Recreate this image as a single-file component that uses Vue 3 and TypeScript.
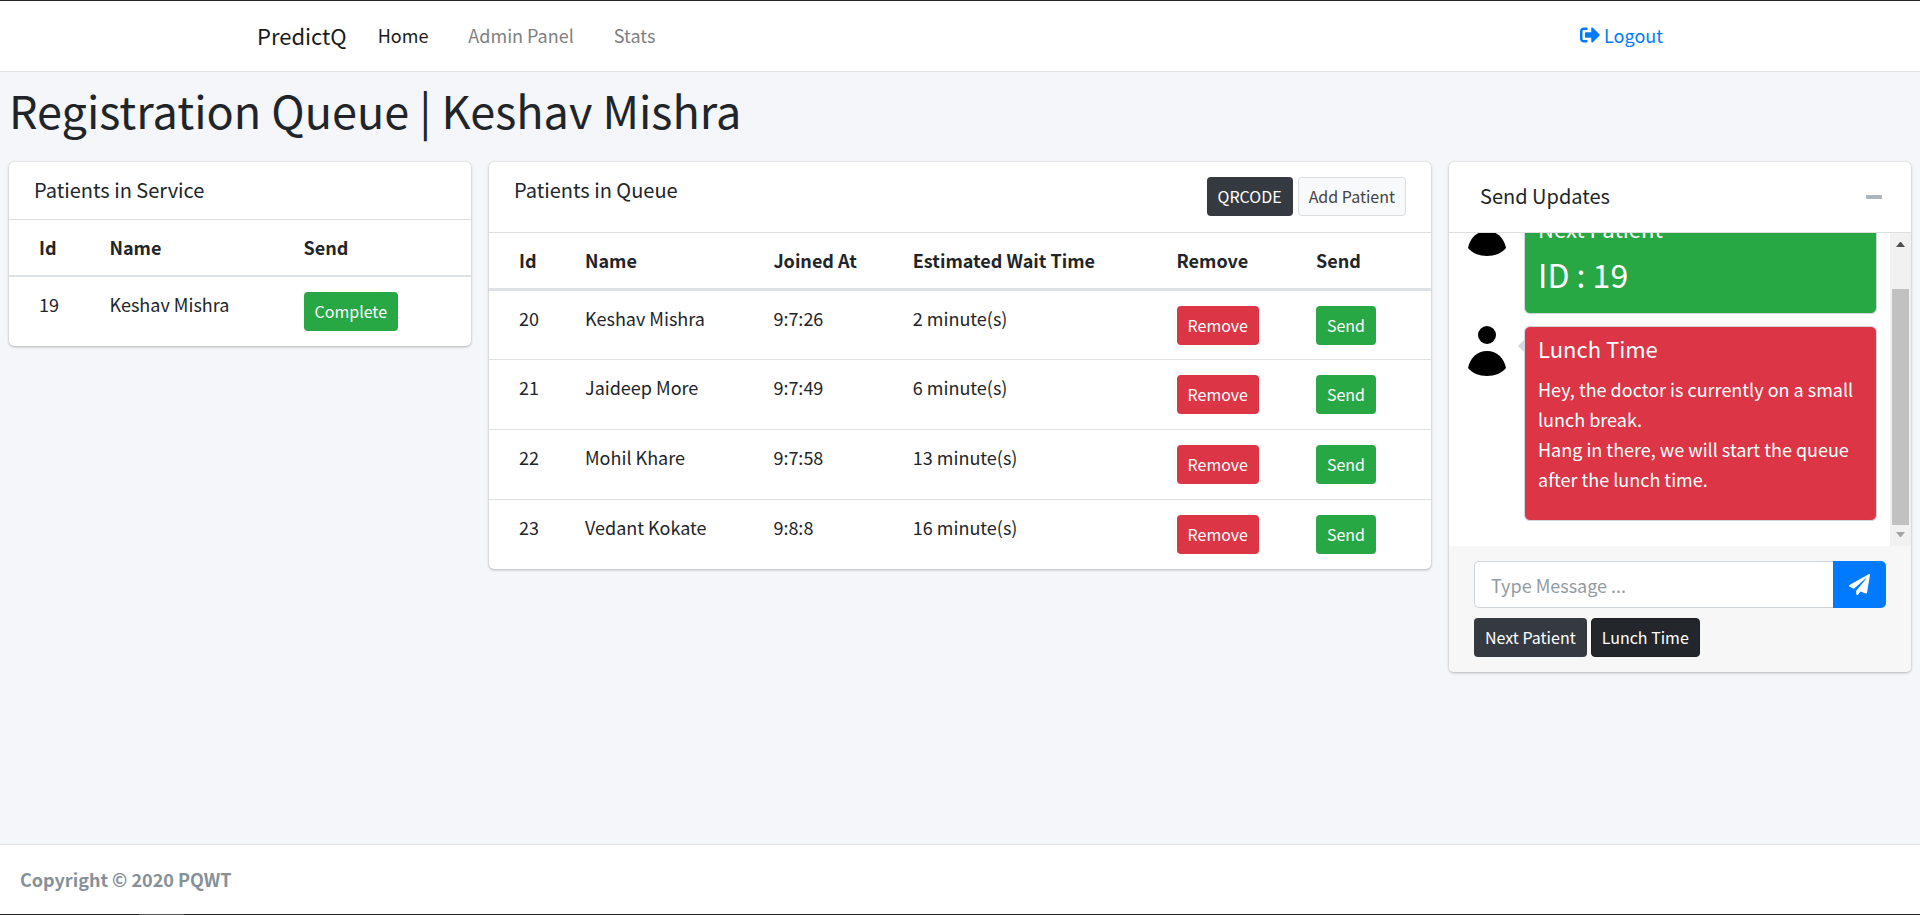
<script setup lang="ts">
import { ref } from 'vue'

interface Patient {
  id: number
  name: string
  joined: string
  wait: number
}

const inService = ref([{ id: 19, name: 'Keshav Mishra' }])

const queue = ref<Patient[]>([
  { id: 20, name: 'Keshav Mishra', joined: '9:7:26', wait: 2 },
  { id: 21, name: 'Jaideep More', joined: '9:7:49', wait: 6 },
  { id: 22, name: 'Mohil Khare', joined: '9:7:58', wait: 13 },
  { id: 23, name: 'Vedant Kokate', joined: '9:8:8', wait: 16 },
])

const message = ref('')
</script>

<template>
  <div class="page">
    <header class="navbar">
      <nav class="nav-inner">
        <a class="brand" href="#">PredictQ</a>
        <a class="nav-link active" href="#">Home</a>
        <a class="nav-link" href="#">Admin Panel</a>
        <a class="nav-link" href="#">Stats</a>
        <a class="logout" href="#">
          <svg class="logout-icon" viewBox="0 0 512 512" aria-hidden="true">
            <path d="M497 273L329 441c-15 15-41 4.500-41-17v-96H152c-13.300 0-24-10.700-24-24v-96c0-13.300 10.700-24 24-24h136V88c0-21.400 25.900-32 41-17l168 168c9.300 9.400 9.300 24.600 0 34zM192 436v-40c0-6.600-5.400-12-12-12H96c-17.700 0-32-14.300-32-32V160c0-17.700 14.300-32 32-32h84c6.600 0 12-5.400 12-12V76c0-6.600-5.400-12-12-12H96c-53 0-96 43-96 96v192c0 53 43 96 96 96h84c6.600 0 12-5.400 12-12z" />
          </svg>
          Logout
        </a>
      </nav>
    </header>

    <main class="content">
      <h1>Registration Queue | Keshav Mishra</h1>

      <div class="row">
        <section class="card side">
          <div class="card-header">
            <h2>Patients in Service</h2>
          </div>
          <table>
            <colgroup>
              <col class="s-id" />
              <col class="s-name" />
              <col />
            </colgroup>
            <thead>
              <tr>
                <th>Id</th>
                <th>Name</th>
                <th>Send</th>
              </tr>
            </thead>
            <tbody>
              <tr v-for="p in inService" :key="p.id">
                <td>{{ p.id }}</td>
                <td>{{ p.name }}</td>
                <td><button type="button" class="btn success">Complete</button></td>
              </tr>
            </tbody>
          </table>
        </section>

        <section class="card middle">
          <div class="card-header">
            <h2>Patients in Queue</h2>
            <div class="actions">
              <button type="button" class="btn dark">QRCODE</button>
              <button type="button" class="btn light">Add Patient</button>
            </div>
          </div>
          <table class="queue">
            <colgroup>
              <col class="q-id" />
              <col class="q-name" />
              <col class="q-joined" />
              <col class="q-wait" />
              <col class="q-remove" />
              <col />
            </colgroup>
            <thead>
              <tr>
                <th>Id</th>
                <th>Name</th>
                <th>Joined At</th>
                <th>Estimated Wait Time</th>
                <th>Remove</th>
                <th>Send</th>
              </tr>
            </thead>
            <tbody>
              <tr v-for="p in queue" :key="p.id">
                <td>{{ p.id }}</td>
                <td>{{ p.name }}</td>
                <td>{{ p.joined }}</td>
                <td>{{ p.wait }} minute(s)</td>
                <td><button type="button" class="btn danger">Remove</button></td>
                <td><button type="button" class="btn success">Send</button></td>
              </tr>
            </tbody>
          </table>
        </section>

        <section class="card side">
          <div class="card-header updates-header">
            <h2>Send Updates</h2>
            <button type="button" class="collapse" aria-label="Collapse"><span></span></button>
          </div>
          <div class="chat">
            <div class="messages">
              <article class="message">
                <svg class="avatar" viewBox="0 0 50 50" aria-hidden="true">
                  <circle cx="25" cy="9" r="9" />
                  <path d="M6 42C8 32 15 25 25 25s17 7 19 17c-4 5-11 8-19 8S10 47 6 42z" />
                </svg>
                <div class="bubble next">
                  <h3>Next Patient</h3>
                  <p class="big">ID : 19</p>
                </div>
              </article>
              <article class="message">
                <svg class="avatar" viewBox="0 0 50 50" aria-hidden="true">
                  <circle cx="25" cy="9" r="9" />
                  <path d="M6 42C8 32 15 25 25 25s17 7 19 17c-4 5-11 8-19 8S10 47 6 42z" />
                </svg>
                <div class="bubble lunch">
                  <h3>Lunch Time</h3>
                  <p>
                    Hey, the doctor is currently on a small lunch break.<br />
                    Hang in there, we will start the queue after the lunch time.
                  </p>
                </div>
              </article>
            </div>
            <div class="scrollbar" aria-hidden="true">
              <svg class="arrow" viewBox="0 0 21 21"><path d="M6 14h9l-4-5h-1z" fill="#505050" /></svg>
              <div class="track"><div class="thumb"></div></div>
              <svg class="arrow" viewBox="0 0 21 21"><path d="M6 7h9l-4 5h-1z" fill="#a3a3a3" /></svg>
            </div>
          </div>
          <form class="composer" @submit.prevent>
            <div class="input-group">
              <input v-model="message" type="text" placeholder="Type Message ..." aria-label="Type Message" />
              <button type="submit" class="send" aria-label="Send message">
                <svg viewBox="0 0 512 512" aria-hidden="true">
                  <path d="M476 3.200L12.500 270.600c-18.100 10.400-15.800 35.600 2.200 43.200L121 358.400l287.300-253.200c5.500-4.900 13.300 2.600 8.600 8.300L176 407v80.500c0 23.600 28.500 32.900 42.500 15.800L282 426l124.600 52.200c14.200 6 30.400-2.900 33-18.200l72-432C515 7.800 493.300-6.800 476 3.200z" />
                </svg>
              </button>
            </div>
            <div class="quick">
              <button type="button" class="btn dark">Next Patient</button>
              <button type="button" class="btn dark pressed">Lunch Time</button>
            </div>
          </form>
        </section>
      </div>
    </main>

    <footer class="footer">
      <strong>Copyright © 2020 PQWT</strong>
    </footer>
    <div class="edge"><span></span></div>
  </div>
</template>

<style>
body {
  margin: 0;
  background: #f4f6f9;
}
</style>

<style scoped>
.page,
.page * {
  box-sizing: border-box;
}

.page {
  display: flex;
  flex-direction: column;
  min-height: 100vh;
  border-top: 1px solid #222;
  color: #212529;
  font-family: 'Noto Sans CJK JP', 'Noto Sans CJK SC', sans-serif;
  font-size: 18px;
  line-height: 30px;
}

h1,
h2,
h3,
p {
  margin: 0;
  font-weight: 400;
}

a {
  text-decoration: none;
}

button,
input {
  font-family: inherit;
}

.navbar {
  background: #fff;
  border-bottom: 1px solid #dee2e6;
}

.nav-inner {
  display: flex;
  align-items: center;
  max-width: 1424px;
  height: 70px;
  margin: 0 auto;
  padding: 0 9px 2px;
}

.brand {
  margin-right: 31px;
  color: #1a1a1a;
  font-size: 22px;
}

.nav-link {
  margin-right: 40px;
  color: #808080;
}

.nav-link.active {
  color: #1a1a1a;
}

.logout {
  display: flex;
  align-items: center;
  gap: 4px;
  margin-left: auto;
  color: #007bff;
}

.logout-icon {
  width: 20px;
  height: 20px;
  fill: currentColor;
}

.content {
  flex: 1;
  padding: 10px 9px 20px;
}

h1 {
  height: 80px;
  font-size: 45px;
  line-height: 56px;
}

.row {
  display: grid;
  grid-template-columns: repeat(12, minmax(0, 1fr));
  gap: 18px;
  align-items: start;
}

.side {
  grid-column: span 3;
}

.middle {
  grid-column: span 6;
}

.card {
  overflow: hidden;
  background: #fff;
  border-radius: 5px;
  box-shadow: 0 0 1px rgba(0, 0, 0, 0.2), 0 1px 3px rgba(0, 0, 0, 0.25);
}

.card-header {
  display: flex;
  align-items: flex-start;
  justify-content: space-between;
  padding: 14px 25px 16px;
  border-bottom: 1px solid #dfdfdf;
}

h2 {
  font-size: 20px;
  line-height: 27px;
}

.actions {
  display: flex;
  gap: 5px;
  padding-top: 1px;
}

.updates-header {
  align-items: center;
  height: 71px;
  padding: 0 25px 3px 31px;
}

.collapse {
  display: flex;
  padding: 13px 4px 10px;
  background: none;
  border: 0;
}

.collapse span {
  width: 16px;
  height: 4px;
  background: #adb5bd;
  border-radius: 1px;
}

table {
  width: 100%;
  table-layout: fixed;
  border-collapse: separate;
  border-spacing: 0;
}

.s-id {
  width: 18.5%;
}

.s-name {
  width: 42%;
}

.q-id {
  width: 8.6%;
}

.q-name {
  width: 20%;
}

.q-joined {
  width: 14.8%;
}

.q-wait {
  width: 28%;
}

.q-remove {
  width: 14.8%;
}

th,
td {
  padding: 15px;
  text-align: left;
  vertical-align: top;
  white-space: nowrap;
}

td {
  line-height: 25px;
}

th {
  padding: 12px 15px 13px;
  border-bottom: 2px solid #dee2e6;
  font-weight: 700;
}

.queue th {
  border-bottom-width: 3px;
}

.queue tbody tr:first-child td {
  padding-bottom: 14px;
}

th:first-child,
td:first-child {
  padding-left: 30px;
}

tbody tr + tr td {
  border-top: 1px solid #dee2e6;
}

.btn {
  display: block;
  height: 39px;
  padding: 0 10px 2px;
  border: 1px solid transparent;
  border-radius: 4px;
  color: #fff;
  font-size: 16px;
  line-height: 26px;
  white-space: nowrap;
}

.success {
  background: #28a745;
}

.danger {
  background: #dc3545;
}

.dark {
  background: #343a40;
}

.pressed {
  background: #23272b;
  border-color: #1d2124;
}

.light {
  background: #f8f9fa;
  border-color: #ddd;
  color: #444;
}

.chat {
  display: flex;
  height: 313px;
}

.messages {
  display: flex;
  flex: 1;
  flex-direction: column;
  justify-content: flex-end;
  gap: 12px;
  overflow: hidden;
  padding: 0 13px 25px;
}

.message {
  display: flex;
  flex-shrink: 0;
  gap: 12px;
}

.avatar {
  flex: none;
  width: 50px;
  height: 50px;
}

.bubble {
  position: relative;
  flex: 1;
  padding: 5px 13px 19px;
  border: 1px solid #d2d6de;
  border-radius: 6px;
  color: #fff;
}

.bubble::before {
  content: '';
  position: absolute;
  top: 12px;
  right: 100%;
  border: 7px solid transparent;
  border-left: 0;
  border-right-color: #d2d6de;
}

.next {
  background: #28a745;
}

.lunch {
  background: #dc3545;
  padding-bottom: 26px;
}

h3 {
  margin-bottom: 10px;
  font-size: 22px;
  line-height: 32px;
}

.big {
  font-size: 32px;
  line-height: 40px;
}

.scrollbar {
  display: flex;
  flex-direction: column;
  width: 21px;
  background: #f1f1f1;
}

.arrow {
  width: 21px;
  height: 21px;
}

.track {
  display: flex;
  flex: 1;
  align-items: flex-end;
  padding: 0 2px;
}

.thumb {
  width: 100%;
  height: 87%;
  background: #c1c1c1;
}

.composer {
  padding: 15px 25px;
  background: #f7f7f7;
}

.input-group {
  display: flex;
  height: 47px;
  margin-bottom: 10px;
}

input {
  flex: 1;
  min-width: 0;
  padding: 0 16px;
  background: #fff;
  border: 1px solid #ced4da;
  border-right: 0;
  border-radius: 5px 0 0 5px;
  font-size: 18px;
}

input::placeholder {
  color: #939ba2;
}

.send {
  display: flex;
  align-items: center;
  justify-content: center;
  width: 53px;
  padding: 0;
  background: #007bff;
  border: 0;
  border-radius: 0 5px 5px 0;
}

.send svg {
  width: 21px;
  height: 21px;
  fill: #fff;
}

.quick {
  display: flex;
  gap: 4px;
}

.footer {
  padding: 20px;
  background: #fff;
  border-top: 1px solid #dee2e6;
  color: #869099;
  line-height: 29px;
}

.edge {
  height: 1px;
  padding-left: 139px;
  background: #222;
}

.edge span {
  display: block;
  width: 45px;
  height: 1px;
  background: #555;
}
</style>
